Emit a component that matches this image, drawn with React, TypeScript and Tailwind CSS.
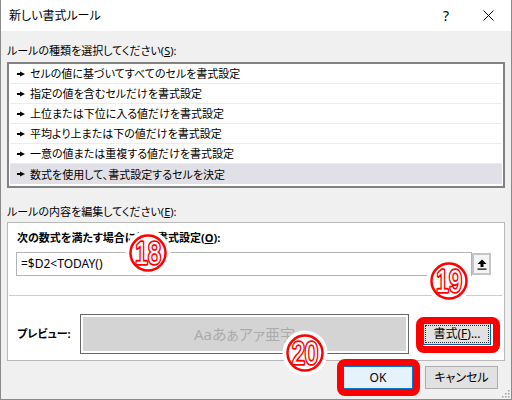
import React from 'react';

const ROWS = [
  'セルの値に基づいてすべてのセルを書式設定',
  '指定の値を含むセルだけを書式設定',
  '上位または下位に入る値だけを書式設定',
  '平均より上または下の値だけを書式設定',
  '一意の値または重複する値だけを書式設定',
  '数式を使用して、書式設定するセルを決定',
];

const Pointer = () => (
  <svg width="8" height="6" viewBox="0 0 8 6" className="shrink-0">
    <rect x="0" y="2" width="4" height="2" fill="#000" />
    <polygon points="3,0.5 8,3 3,5.5" fill="#000" />
  </svg>
);

const Badge = ({ n, className }: { n: string; className: string }) => (
  <svg width="46" height="46" viewBox="0 0 46 46" className={className}>
    <circle cx="23" cy="23" r="22.5" fill="#fff" />
    <circle cx="23" cy="23" r="17.5" fill="#fff" stroke="#ff0000" strokeWidth="2.5" />
    <g transform="translate(23 34) scale(0.8 1.05)" fontFamily="Liberation Sans, sans-serif" fontSize="29" textAnchor="middle">
      <text fill="#ff0000" stroke="#ff0000" strokeWidth="3.4" strokeLinejoin="round">{n}</text>
      <text fill="#ffffff">{n}</text>
    </g>
  </svg>
);

export default function App() {
  return (
    <div className="relative w-[512px] h-[400px] overflow-hidden bg-[#f0f0f0] border-x border-b border-[#8a8a8a] text-[11px] text-black font-['Noto_Sans','Noto_Sans_CJK_JP',sans-serif] [font-feature-settings:'palt']">
      {/* title bar */}
      <div className="h-[31px] bg-white flex items-center pl-[8px]">
        <span className="flex-1 leading-none text-[12px]">新しい書式ルール</span>
        <span className="w-[14px] text-[14px] leading-none text-center mr-[30px]">?</span>
        <svg width="11" height="11" viewBox="0 0 11 11" className="mr-[17px]">
          <path d="M0.5 0.5 L10.5 10.5 M10.5 0.5 L0.5 10.5" stroke="#000" strokeWidth="1" />
        </svg>
      </div>

      <div className="px-[6px]">
        <div className="mt-[11px] h-[18px] leading-[18px]">
          ルールの種類を選択してください(<span className="underline">S</span>):
        </div>

        {/* rule type list */}
        <div className="mt-[2px] h-[126px] border-2 border-[#828282] bg-white px-[1px]">
          {ROWS.map((r, i) => (
            <div
              key={r}
              className={
                i === ROWS.length - 1
                  ? 'h-[20px] flex items-center gap-[5px] pl-[7px] bg-[#e0e0e6]'
                  : 'h-[20px] flex items-center gap-[5px] pl-[7px] border-b border-[#ececec]'
              }
            >
              <Pointer />
              <span className="leading-none">{r}</span>
            </div>
          ))}
        </div>

        <div className="mt-[15px] h-[18px] leading-[18px]">
          ルールの内容を編集してください(<span className="underline">E</span>):
        </div>

        {/* rule description group */}
        <div className="mt-[1px] h-[139px] border border-[#b9b9b9] bg-white flex flex-col">
          <div className="mt-[6px] ml-[9px] h-[18px] leading-[18px] font-bold">
            次の数式を満たす場合に値を書式設定(<span className="underline">O</span>):
          </div>
          <div className="mt-[5px] ml-[8px] flex items-center">
            <div className="w-[456px] h-[24px] border border-[#b4b4b4] flex items-center pl-[4px] text-[12px]">
              =$D2&lt;TODAY()
            </div>
            <div className="w-[19px] h-[22px] border-2 border-[#c4c4c4] bg-[#f4f4f4] flex items-center justify-center">
              <svg width="10" height="11" viewBox="0 0 10 11">
                <polygon points="5,0.5 9.5,5 6.5,5 6.5,8 3.5,8 3.5,5 0.5,5" fill="#000" />
                <rect x="0.5" y="9.5" width="9" height="1.2" fill="#000" />
              </svg>
            </div>
          </div>
          <div className="mt-[19px] ml-[1px] mr-[2px] h-px bg-[#cdcdcd]" />
          <div className="mt-[18px] flex items-center">
            <div className="w-[72px] pl-[9px] font-bold">プレビュー:</div>
            <div className="w-[329px] h-[40px] border border-[#666] p-[2px]">
              <div className="h-full bg-[#d4d4d4] flex items-center justify-center text-[15px] text-[#ababab]">
                Aaあぁアァ亜宇
              </div>
            </div>
            <button className="ml-[14px] w-[68px] h-[22px] bg-[#e1e1e1] border border-[#0a5fb0] p-[1px]">
              <div className="h-full border border-dotted border-[#333] flex items-center justify-center leading-none text-[12px]">
                書式(<span className="underline">F</span>)...
              </div>
            </button>
          </div>
        </div>

        {/* dialog buttons */}
        <div className="mt-[5px] flex justify-end gap-[12px] pr-[7px] text-[12px]">
          <button className="w-[70px] h-[23px] bg-[#e5f1fb] border border-[#0078d7] leading-none">OK</button>
          <button className="w-[73px] h-[23px] bg-[#e1e1e1] border border-[#adadad] leading-none">キャンセル</button>
        </div>
      </div>

      {/* size grip */}
      <svg width="10" height="10" viewBox="0 0 10 10" className="absolute right-[1px] bottom-[1px]">
        {[
          [8, 2], [8, 5], [5, 5], [8, 8], [5, 8], [2, 8],
        ].map(([x, y]) => (
          <rect key={`${x}-${y}`} x={x} y={y} width="1.5" height="1.5" fill="#a0a0a0" />
        ))}
      </svg>

      {/* annotations */}
      <div className="absolute left-[415px] top-[317px] w-[84px] h-[36px] border-[7px] border-[#ff0000] rounded-[8px]" />
      <div className="absolute left-[336px] top-[359px] w-[83px] h-[37px] border-[7px] border-[#ff0000] rounded-[8px]" />
      <Badge n="18" className="absolute left-[124px] top-[230px]" />
      <Badge n="19" className="absolute left-[425px] top-[258px]" />
      <Badge n="20" className="absolute left-[281px] top-[330px]" />
    </div>
  );
}
